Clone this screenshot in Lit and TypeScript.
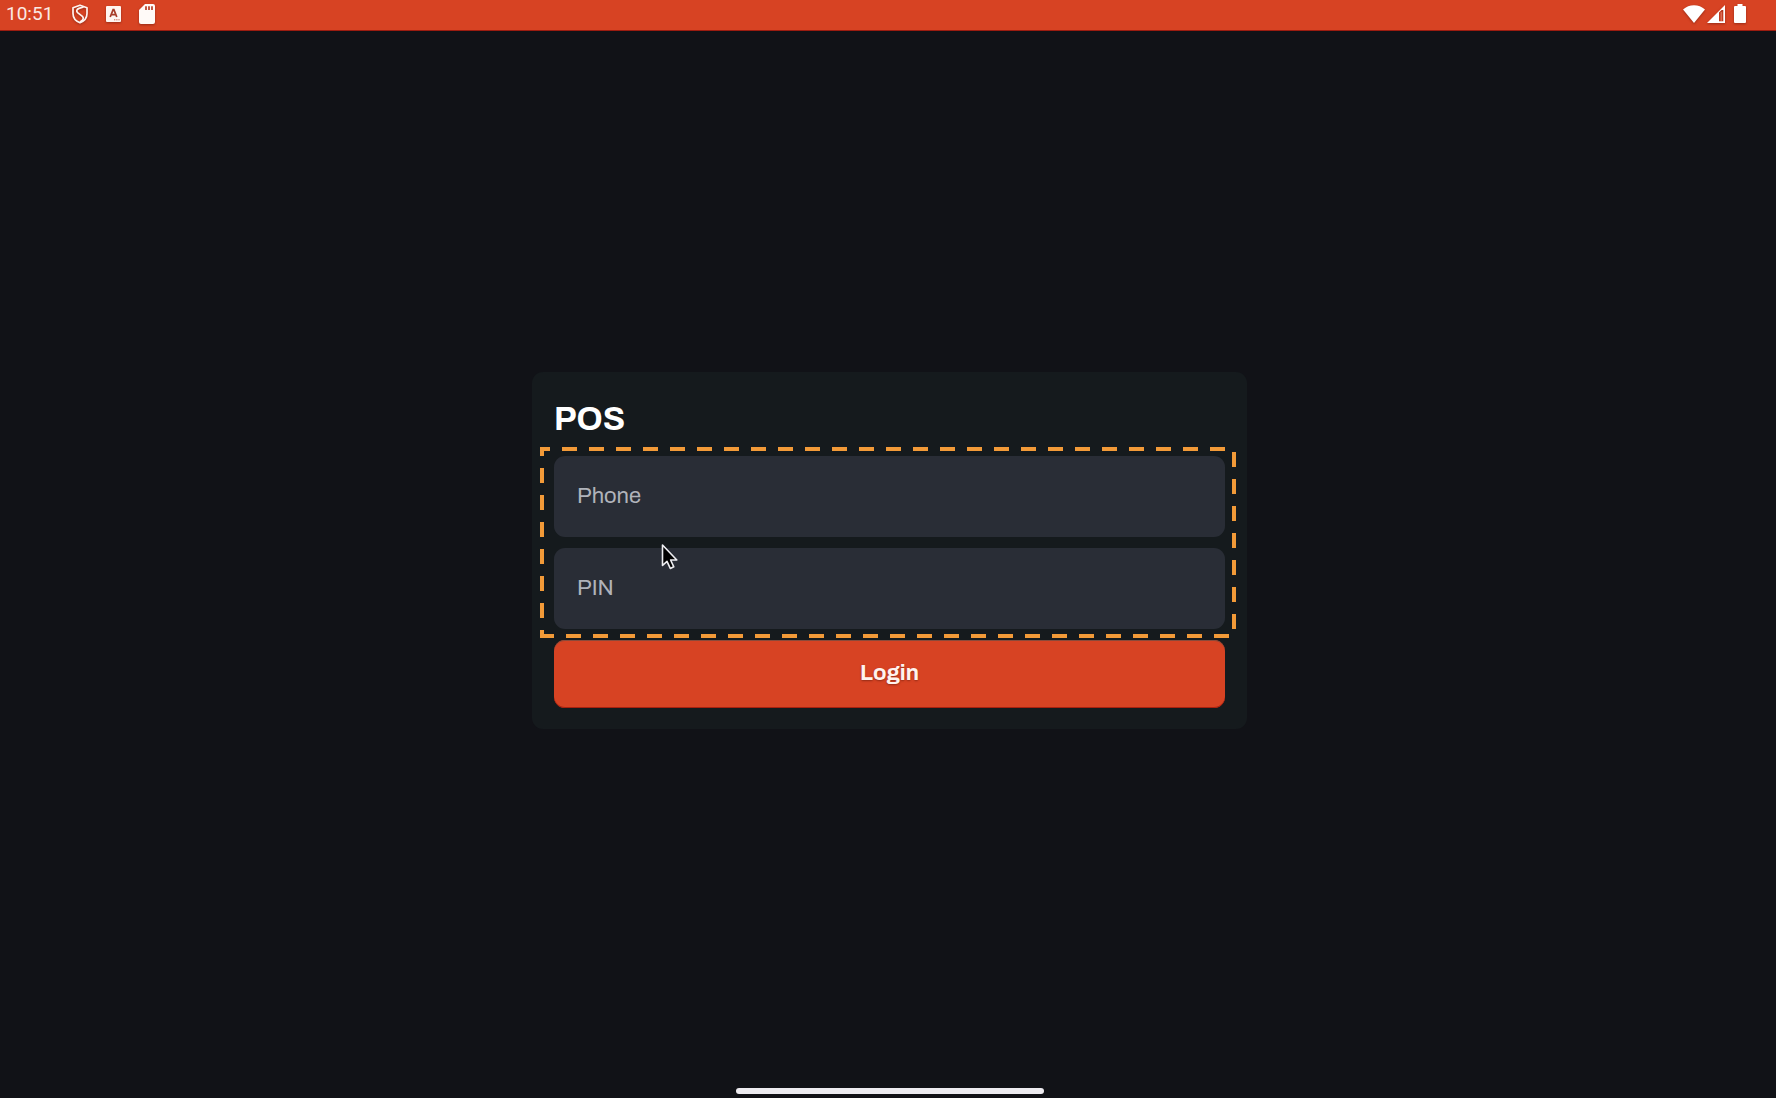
import { LitElement, html, css, svg } from "lit";
import { customElement } from "lit/decorators.js";

@customElement("status-bar")
class StatusBar extends LitElement {
  static styles = css`
    :host {
      display: block;
    }
    .bar {
      display: flex;
      align-items: center;
      justify-content: space-between;
      box-sizing: border-box;
      height: 31px;
      padding: 0 30px 3px 6px;
      background: #d74323;
      border-bottom: 1px solid #9c1c10;
      color: #fbe9e4;
      font: 19px/24px Roboto, "Liberation Sans", sans-serif;
    }
    .group {
      display: flex;
      align-items: center;
    }
    .left {
      gap: 18px;
    }
    time {
      padding: 1px 1px 0 0;
    }
    .right {
      gap: 2px;
    }
    .battery {
      margin-left: 7px;
    }
    svg {
      display: block;
      filter: drop-shadow(0 1px 1px rgba(90, 20, 10, 0.5));
    }
  `;

  render() {
    return html`
      <header class="bar">
        <div class="group left">
          <time>10:51</time>
          <svg width="16" height="20" viewBox="0 0 16 20" fill="none" stroke="#fff3ef" stroke-width="1.7" stroke-linejoin="round" aria-hidden="true">
            <path d="M8 1.2 L15 3.8 V9.5 C15 14 12 17.2 8 18.8 C4 17.2 1 14 1 9.5 V3.8 Z" />
            <path d="M11.6 3 L7 4.4 C4.4 5.4 4.2 7.2 5.6 8.6 L10.4 12.4 C11.8 13.8 11.4 15.4 9.8 16.8 L8 18" />
          </svg>
          <svg width="15" height="16" viewBox="0 0 15 16" aria-hidden="true">
            <rect width="15" height="16" rx="1" fill="#fff5f1" />
            <path d="M4.2 11 L7.1 3.6 H7.9 L10.8 11 M5.2 8.6 H9.8" fill="none" stroke="#a83c28" stroke-width="1.7" />
            <path d="M8 13.8 H9.3 M10.2 13.8 H11.5 M12.4 13.8 H13.6" stroke="#c96a55" stroke-width="1" />
          </svg>
          <svg width="16" height="20" viewBox="0 0 16 20" aria-hidden="true">
            <path d="M6 0 H14 A2 2 0 0 1 16 2 V18 A2 2 0 0 1 14 20 H2 A2 2 0 0 1 0 18 V6 Z" fill="#fffaf8" />
            <path d="M7 2.2 V6 M10 2.2 V6 M13 2.2 V6" stroke="#c0523c" stroke-width="1.9" />
          </svg>
        </div>
        <div class="group right">
          <svg width="22" height="18" viewBox="0 0 22 18" aria-hidden="true">
            <path d="M11 18 L0 4.5 C6 -1.2 16 -1.2 22 4.5 Z" fill="#fff" />
          </svg>
          <svg width="18" height="18" viewBox="0 0 18 18" aria-hidden="true">
            <path fill-rule="evenodd" d="M18 0 V18 H0 Z M12 7.6 V16.3 H16.3 V5 H14.6 Z" fill="#fff" />
            <path d="M14.2 7 V16" stroke="#fff" stroke-width="1" opacity="0.35" />
          </svg>
          <svg class="battery" width="12" height="19" viewBox="0 0 12 19" aria-hidden="true">
            <path d="M3.5 0 H8.5 V2 H11 A1 1 0 0 1 12 3 V18 A1 1 0 0 1 11 19 H1 A1 1 0 0 1 0 18 V3 A1 1 0 0 1 1 2 H3.5 Z" fill="#fff" />
          </svg>
        </div>
      </header>
    `;
  }
}

@customElement("login-card")
class LoginCard extends LitElement {
  static styles = css`
    :host {
      display: block;
      width: 100%;
      max-width: 715px;
    }
    .card {
      display: flex;
      flex-direction: column;
      gap: 11px;
      padding: 22px 22px 21px;
      border-radius: 11px;
      background: #151a1d;
    }
    .title {
      margin: 0;
      color: #fff;
      font-size: 33px;
      font-weight: 700;
      line-height: 51px;
    }
    .fields {
      position: relative;
      display: flex;
      flex-direction: column;
      gap: 11px;
    }
    .input {
      display: block;
      box-sizing: border-box;
      width: 100%;
      height: 81px;
      margin: 0;
      padding: 0 23px;
      border: 0;
      border-radius: 11px;
      outline: none;
      background: #292d36;
      color: #fff;
      font: inherit;
      font-size: 22px;
    }
    .input::placeholder {
      color: #b0b3ba;
      opacity: 1;
    }
    .submit {
      box-sizing: border-box;
      height: 68px;
      margin: 0;
      padding: 0 22px 1px;
      border: 0;
      border-radius: 11px;
      background: #d74323;
      box-shadow: inset 0 -1px 0 #a8200f, inset 0 1px 0 #8a4a3a;
      color: #fff3ee;
      font: inherit;
      font-size: 22px;
      font-weight: 700;
      text-shadow: 0 1px 2px rgba(80, 20, 10, 0.5);
    }
    .outline {
      position: absolute;
      inset: -7px -9px -7px -12px;
      pointer-events: none;
    }
    .outline svg {
      display: block;
      width: 100%;
      height: 100%;
      overflow: visible;
      stroke: #f29a38;
      stroke-width: 4;
      stroke-dasharray: 15 12;
    }
    .pointer {
      position: absolute;
      left: 107px;
      top: 87px;
      pointer-events: none;
    }
  `;

  private outline() {
    return svg`
      <line x1="0" y1="100%" x2="0" y2="0" stroke-dashoffset="9" />
      <line x1="-2" y1="0" x2="100%" y2="0" stroke-dashoffset="5" />
      <line x1="100%" y1="0" x2="100%" y2="100%" stroke-dashoffset="24" />
      <line x1="100%" y1="100%" x2="-2" y2="100%" stroke-dashoffset="22" />
    `;
  }

  render() {
    return html`
      <form class="card" @submit=${(e: Event) => e.preventDefault()}>
        <h1 class="title">POS</h1>
        <div class="fields">
          <input class="input" type="tel" placeholder="Phone" aria-label="Phone" />
          <input class="input" type="password" placeholder="PIN" aria-label="PIN" />
          <div class="outline"><svg aria-hidden="true">${this.outline()}</svg></div>
          <svg class="pointer" width="18" height="28" viewBox="0 0 18 28" aria-hidden="true">
            <path d="M1.5 2 V22.5 L6 18.3 L9.3 25.4 L12.8 23.8 L9.6 17 H15.8 Z" fill="#000" stroke="#eeeef2" stroke-width="1.6" stroke-linejoin="round" />
          </svg>
        </div>
        <button class="submit" type="submit">Login</button>
      </form>
    `;
  }
}

@customElement("app-root")
class AppRoot extends LitElement {
  static styles = css`
    :host {
      display: block;
      font-family: Archivo, "Liberation Sans", Arial, sans-serif;
    }
    .screen {
      display: flex;
      flex-direction: column;
      min-height: 100vh;
      background: #111217;
    }
    .main {
      display: flex;
      flex: 1;
      align-items: center;
      justify-content: center;
      padding-left: 3px;
    }
    .nav {
      display: flex;
      align-items: flex-end;
      justify-content: center;
      box-sizing: border-box;
      height: 29px;
      padding: 0 0 4px 3px;
    }
    .handle {
      width: 308px;
      height: 6px;
      border-radius: 3px;
      background: #edebf0;
    }
  `;

  render() {
    return html`
      <div class="screen">
        <status-bar></status-bar>
        <main class="main"><login-card></login-card></main>
        <footer class="nav"><div class="handle"></div></footer>
      </div>
    `;
  }
}
